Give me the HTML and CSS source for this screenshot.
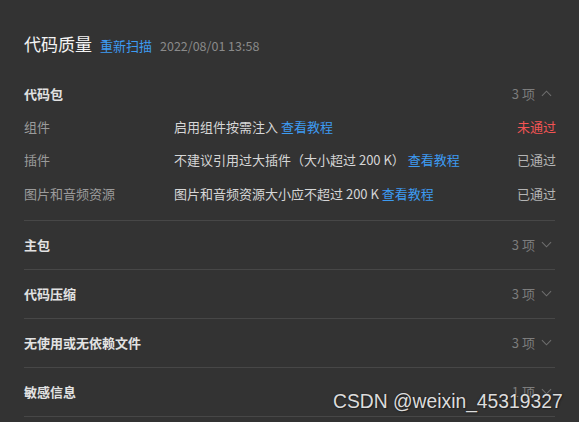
FILE: index.html
```html
<!DOCTYPE html>
<html>
<head>
    <title>代码质量</title>
    <link rel="stylesheet" href="styles.css">
</head>
<body>
    <div class="page">
        <div class="title-bar">
            <span class="title">代码质量</span>
            <a class="link rescan">重新扫描</a>
            <span class="time">2022/08/01 13:58</span>
        </div>

        <div class="section open">
            <div class="section-head">
                <span class="section-name">代码包</span>
                <span class="count">3 项
                    <svg class="chevron" viewBox="0 0 12 7"><path d="M1 6 L6 1 L11 6"/></svg>
                </span>
            </div>
            <div class="item">
                <span class="item-name">组件</span>
                <span class="item-desc">启用组件按需注入 <a class="link">查看教程</a></span>
                <span class="status fail">未通过</span>
            </div>
            <div class="item">
                <span class="item-name">插件</span>
                <span class="item-desc">不建议引用过大插件（大小超过 200 K） <a class="link">查看教程</a></span>
                <span class="status">已通过</span>
            </div>
            <div class="item">
                <span class="item-name">图片和音频资源</span>
                <span class="item-desc">图片和音频资源大小应不超过 200 K <a class="link">查看教程</a></span>
                <span class="status">已通过</span>
            </div>
        </div>

        <div class="section">
            <div class="section-head">
                <span class="section-name">主包</span>
                <span class="count">3 项
                    <svg class="chevron" viewBox="0 0 12 7"><path d="M1 1 L6 6 L11 1"/></svg>
                </span>
            </div>
        </div>

        <div class="section">
            <div class="section-head">
                <span class="section-name">代码压缩</span>
                <span class="count">3 项
                    <svg class="chevron" viewBox="0 0 12 7"><path d="M1 1 L6 6 L11 1"/></svg>
                </span>
            </div>
        </div>

        <div class="section">
            <div class="section-head">
                <span class="section-name">无使用或无依赖文件</span>
                <span class="count">3 项
                    <svg class="chevron" viewBox="0 0 12 7"><path d="M1 1 L6 6 L11 1"/></svg>
                </span>
            </div>
        </div>

        <div class="section">
            <div class="section-head">
                <span class="section-name">敏感信息</span>
                <span class="count">1 项
                    <svg class="chevron" viewBox="0 0 12 7"><path d="M1 1 L6 6 L11 1"/></svg>
                </span>
            </div>
        </div>
    </div>

    <div class="watermark">CSDN @weixin_45319327</div>
</body>
</html>
```

FILE: styles.css
```css
html, body {
    margin: 0;
    height: 100%;
    background: #333333;
    overflow: hidden;
}
body {
    font-family: "Noto Sans CJK SC", "Noto Sans", sans-serif;
    font-size: 13px;
    color: #d4d4d4;
    position: relative;
}
.page {
    padding: 34px 24px 0 24px;
}
.title-bar {
    display: flex;
    align-items: baseline;
    height: 20px;
    line-height: 20px;
    margin-bottom: 15px;
}
.title {
    font-size: 17px;
    color: #f4f4f4;
}
.link {
    color: #3d9bf2;
    cursor: pointer;
}
.rescan {
    margin-left: 8px;
}
.time {
    margin-left: 8px;
    color: #8a8a8a;
    font-size: 12.5px;
}
.section {
    border-bottom: 1px solid #474747;
}
.section-head {
    display: flex;
    justify-content: space-between;
    align-items: center;
    height: 48px;
}
.section.open .section-head {
    height: 20px;
    padding-top: 14px;
    margin-bottom: 7px;
}
.section.open {
    padding-bottom: 10px;
}
.section-name {
    font-weight: bold;
    color: #e2e2e2;
}
.count {
    display: flex;
    align-items: center;
    color: #7d7d7d;
    padding-right: 3px;
}
.chevron {
    width: 11px;
    height: 7px;
    margin-left: 6px;
    fill: none;
    stroke: #6f6f6f;
    stroke-width: 1.1;
}
.item {
    display: flex;
    align-items: center;
    height: 33.3px;
}
.item-name {
    width: 150px;
    color: #9b9b9b;
}
.item-desc {
    flex: 1;
    color: #d6d6d6;
}
.status {
    color: #b4b4b4;
    margin-right: -1px;
}
.status.fail {
    color: #f25454;
}
.watermark {
    position: absolute;
    left: 333px;
    top: 391px;
    font-family: "Liberation Sans", Arial, sans-serif;
    font-size: 19.3px;
    color: #dcdcdc;
    text-shadow: 0 0 2px #222, 1px 1px 1px #222;
}
```
